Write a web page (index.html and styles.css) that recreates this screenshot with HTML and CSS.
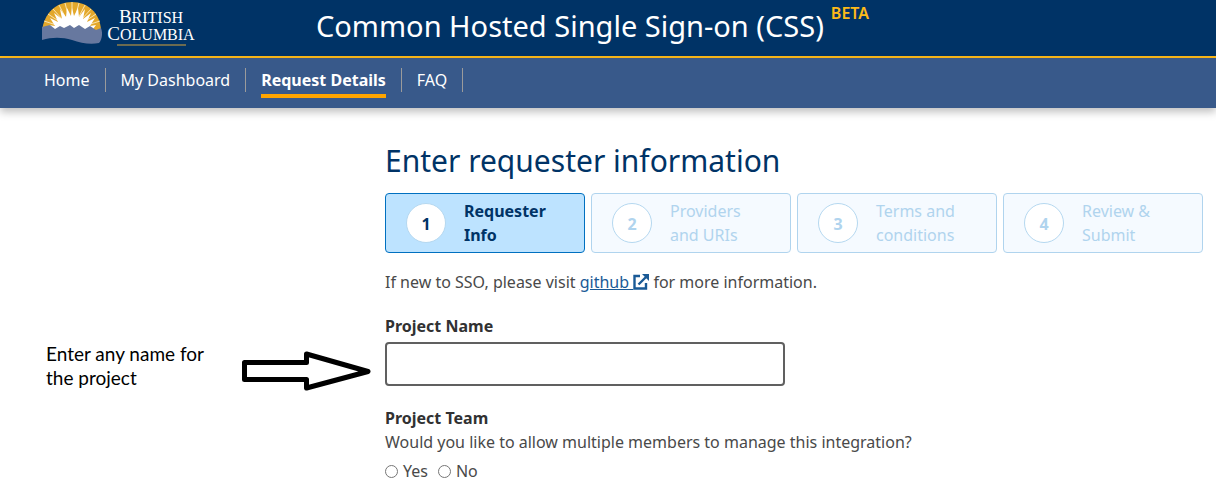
FILE: index.html
```html
<!DOCTYPE html>
<html lang="en">
<head>
<meta charset="utf-8">
<meta name="viewport" content="width=device-width, initial-scale=1">
<title>Common Hosted Single Sign-on (CSS)</title>
<link rel="stylesheet" href="styles.css">
</head>
<body>
<header class="header">
  <a class="logo" href="#" aria-label="British Columbia">
    <svg class="logo-mark" viewBox="0 0 60 42" aria-hidden="true">
      <path fill="#e3a82b" d="M0 29C2 11 14 0 30 0s28 11 29 28L30 36z"/>
      <g stroke="#fff3d0" stroke-width=".8">
        <path d="M30 28L2 19M30 28L6 12M30 28L11 7M30 28L17 3M30 28L23 1M30 28L30 0M30 28L37 1M30 28L43 3M30 28L49 7M30 28L54 12M30 28L58 19"/>
      </g>
      <path fill="#fff" d="M12 30l-5-7 6 1-5-8 8 4-4-9 8 6-2-10 6 8 1-9 4 8 1-8 2 8 4-8 1 9 6-8-2 10 8-6-4 9 8-4-5 8 6-1-5 7z"/>
      <path fill="#67789f" d="M0 25l8-2 5 4 5-3 4 2 6-3 4 3 5-3 6 4 5-3 6 4 5-2c2 5 1 12-2 15-9 2-18 0-27-3-10-3-20-3-30 0z"/>
    </svg>
    <span class="wordmark">
      <span class="word"><span class="cap">B</span>RITISH</span>
      <span class="word"><span class="cap">C</span>OLUMBIA</span>
      <span class="word-rule"></span>
    </span>
  </a>
  <div class="title">Common Hosted Single Sign-on (CSS)<sup class="beta">BETA</sup></div>
</header>
<nav class="nav">
  <a class="nav-link" href="#">Home</a>
  <a class="nav-link" href="#">My Dashboard</a>
  <a class="nav-link" href="#" aria-current="page"><span class="current">Request Details</span></a>
  <a class="nav-link" href="#">FAQ</a>
</nav>
<div class="layout">
  <aside class="note">
    <p class="note-text">Enter any name for the project</p>
    <svg class="arrow" viewBox="0 0 130 40" aria-hidden="true">
      <path d="M3.500 11.500H65.500V3L127 20.500 65.500 37V28.500H3.500z" fill="#fff" stroke="#000" stroke-width="5" stroke-linejoin="round"/>
    </svg>
  </aside>
  <main class="main">
    <h1 class="heading">Enter requester information</h1>
    <ol class="steps">
      <li class="step step-active"><span class="num">1</span><span class="step-label">Requester Info</span></li>
      <li class="step"><span class="num">2</span><span class="step-label">Providers and URIs</span></li>
      <li class="step"><span class="num">3</span><span class="step-label">Terms and conditions</span></li>
      <li class="step"><span class="num">4</span><span class="step-label">Review &amp; Submit</span></li>
    </ol>
    <p class="intro">If new to SSO, please visit <a class="link" href="#">github <svg class="ext" viewBox="0 0 16 16" aria-hidden="true"><path d="M7 2H1.500v12.500H13V9M5.500 10.500L13 3" fill="none" stroke="#1a5a96" stroke-width="2.400"/><path d="M9 0h7v7z" fill="#1a5a96"/></svg></a> for more information.</p>
    <form class="form">
      <label class="label" for="project">Project Name</label>
      <input class="text-input" id="project" type="text">
      <fieldset class="team">
        <legend class="label">Project Team</legend>
        <p class="question">Would you like to allow multiple members to manage this integration?</p>
        <div class="options">
          <label class="option"><input class="radio" type="radio" name="team">Yes</label>
          <label class="option"><input class="radio" type="radio" name="team">No</label>
        </div>
      </fieldset>
    </form>
  </main>
</div>
</body>
</html>
```

FILE: styles.css
```css
* { box-sizing: border-box; }
body {
  margin: 0;
  background: #fff;
  color: #494949;
  font: 16px/24px "Noto Sans", sans-serif;
}
.header {
  display: flex;
  align-items: flex-start;
  height: 58px;
  padding-left: 42px;
  background: #003366;
  border-bottom: 2px solid #fcba19;
}
.logo {
  display: flex;
  width: 274px;
  padding-top: 2px;
  color: #fff;
  text-decoration: none;
}
.logo-mark { width: 60px; height: 42px; }
.wordmark {
  display: flex;
  flex-direction: column;
  align-items: center;
  width: 90px;
  margin-left: 4px;
  padding-top: 7px;
  font: 16px/16px "Liberation Serif", serif;
}
.cap { font-size: 19px; line-height: 16px; }
.word-rule { width: 69px; height: 2px; margin-top: 1px; background: #6b6b50; }
.title { padding-top: 6px; color: #fff; font-size: 29px; line-height: 40px; white-space: nowrap; }
.beta { margin-left: 7px; color: #fcba19; font-size: 16px; font-weight: 600; line-height: 0; vertical-align: 18px; }
.nav {
  display: flex;
  align-items: center;
  height: 50px;
  padding: 0 28px 6px;
  background: #38598a;
  box-shadow: 0 4px 8px rgba(0, 0, 0, 0.25);
}
.nav-link {
  padding: 0 15px;
  border-right: 1px solid #9b9b9b;
  color: #fff;
  line-height: 24px;
  text-decoration: none;
}
.nav-link:first-child { padding-left: 16px; }
.current {
  display: block;
  height: 24px;
  font-weight: 700;
  box-shadow: 0 2px #38598a, 0 6px orange;
}
.layout { display: grid; grid-template-columns: 385px 1fr; }
.note { display: flex; align-items: flex-start; padding: 234px 14px 0 46px; }
.note-text { width: 180px; margin: 0; color: #000; font: 19px/24px Lato, sans-serif; }
.arrow { width: 130px; height: 40px; margin: 9px 0 0 15px; }
.main { padding: 33px 13px 0 0; }
.heading { margin: 0; color: #003366; font-size: 30px; font-weight: 400; line-height: 40px; }
.steps { display: flex; gap: 6px; margin: 12px 0 0; padding: 0; list-style: none; }
.step {
  display: flex;
  flex: 1;
  align-items: center;
  height: 60px;
  padding: 0 20px;
  border: 1px solid #b0d4ee;
  border-radius: 4px;
  background: #f5faff;
  color: #b0d4ee;
}
.step-active { border-color: #0070c0; background: #bde3ff; color: #003366; font-weight: 700; }
.num {
  width: 40px;
  height: 40px;
  border: 1px solid #b5d8f0;
  border-radius: 50%;
  background: #fff;
  font-weight: 700;
  line-height: 41px;
  text-align: center;
}
.step-label { width: 90px; margin-left: 18px; }
.intro { margin: 17px 0 20px; }
.link { color: #1a5a96; }
.ext { width: 16px; height: 16px; vertical-align: -2px; }
.label { display: block; padding: 0; color: #313132; font-weight: 700; }
.text-input {
  display: block;
  width: 400px;
  max-width: 100%;
  height: 44px;
  margin-top: 4px;
  padding: 8px;
  border: 2px solid #606060;
  border-radius: 4px;
  font: inherit;
}
.team { margin: 20px 0 0; padding: 0; border: 0; }
.question { margin: 0; }
.options { display: flex; gap: 10px; margin-top: 5px; }
.option { display: flex; align-items: center; gap: 5px; }
.radio { width: 13px; height: 13px; margin: 0; }
```
